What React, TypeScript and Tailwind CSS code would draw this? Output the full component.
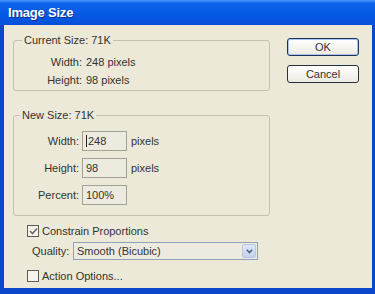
import React from 'react';

function Checkbox({ checked = false }: { checked?: boolean }) {
  return (
    <span className="w-[12px] h-[12px] shrink-0 border border-[#5c5c58] bg-[#f4f3ec] flex items-center justify-center">
      {checked && (
        <svg width="9" height="8" viewBox="0 0 9 8">
          <polyline points="1,4 3.5,6.5 8,1.5" fill="none" stroke="#6b6b66" strokeWidth="1.6" />
        </svg>
      )}
    </span>
  );
}

function Field({ label, value, caret = false, unit }: { label: string; value: string; caret?: boolean; unit?: string }) {
  return (
    <div className="flex items-center h-[20px]">
      <span className="w-[68px] text-right pr-[3px]">{label}</span>
      <div className="w-[45px] h-[20px] border border-[#a3a194] bg-[#edebe0] flex items-center pl-[3px]">
        {caret && <span className="w-px h-[12px] bg-[#222] mr-[1px]" />}
        <span>{value}</span>
      </div>
      {unit && <span className="ml-[4px]">{unit}</span>}
    </div>
  );
}

export default function App() {
  return (
    <div className="w-[375px] h-[294px] flex flex-col overflow-hidden bg-[#0a47c9] font-['Liberation_Sans',Arial,sans-serif] text-[11px] text-[#333330]">
      {/* Title bar */}
      <div className="h-[25px] shrink-0 flex items-center pl-[8px] bg-[linear-gradient(180deg,#4a97fb_0%,#0d62ea_14%,#0659e4_55%,#0650d8_100%)]">
        <span className="text-white font-bold text-[13px] tracking-[-0.2px] [text-shadow:1px_1px_0_#0b2f8f]">Image Size</span>
      </div>

      {/* Body */}
      <div className="flex-1 ml-[4px] mr-[3px] mb-[6px] bg-[#ece9d8] flex">
        <div className="w-[266px] pl-[9px] pt-[9px] flex flex-col">
          <fieldset className="border border-[#c3c1b2] rounded-[3px] pb-[3px]">
            <legend className="ml-[8px] px-[2px] leading-[13px]">Current Size: 71K</legend>
            <div className="pt-[8px] flex flex-col gap-[4px] leading-[14px]">
              <div className="flex">
                <span className="w-[72px] text-right pr-[4px]">Width:</span>
                <span>248 pixels</span>
              </div>
              <div className="flex">
                <span className="w-[72px] text-right pr-[4px]">Height:</span>
                <span>98 pixels</span>
              </div>
            </div>
          </fieldset>

          <fieldset className="mt-[18px] border border-[#c3c1b2] rounded-[3px] pb-[10px]">
            <legend className="ml-[6px] px-[2px] leading-[13px]">New Size: 71K</legend>
            <div className="pt-[9px] flex flex-col gap-[7px]">
              <Field label="Width:" value="248" caret unit="pixels" />
              <Field label="Height:" value="98" unit="pixels" />
              <Field label="Percent:" value="100%" />
            </div>
          </fieldset>

          <label className="mt-[9px] ml-[14px] flex items-center gap-[3px] h-[12px]">
            <Checkbox checked />
            <span>Constrain Proportions</span>
          </label>

          <div className="mt-[5px] ml-[19px] flex items-center h-[18px]">
            <span className="w-[41px]">Quality:</span>
            <div className="w-[185px] h-[18px] border border-[#8fa2b8] bg-[#edebe0] flex items-center justify-between pl-[3px] pr-px">
              <span>Smooth (Bicubic)</span>
              <span className="w-[14px] h-[14px] rounded-[2px] bg-[linear-gradient(180deg,#dfe7f6,#c3d1ec)] border border-[#b9c6df] flex items-center justify-center">
                <svg width="7" height="5" viewBox="0 0 7 5">
                  <polyline points="0.8,0.8 3.5,3.6 6.2,0.8" fill="none" stroke="#4a5f8a" strokeWidth="1.6" />
                </svg>
              </span>
            </div>
          </div>

          <label className="mt-[10px] ml-[14px] flex items-center gap-[3px] h-[12px]">
            <Checkbox />
            <span>Action Options...</span>
          </label>
        </div>

        <div className="ml-[17px] pt-[13px] flex flex-col gap-[9px]">
          <button className="w-[72px] h-[18px] rounded-[3px] border border-[#1f3358] bg-[linear-gradient(180deg,#ffffff,#eceae0)] shadow-[inset_0_0_0_1px_#a9c2ef] text-[11px] text-[#333330]">
            OK
          </button>
          <button className="w-[72px] h-[18px] rounded-[3px] border border-[#2a2f3a] bg-[linear-gradient(180deg,#ffffff,#eceae0)] text-[11px] text-[#333330]">
            Cancel
          </button>
        </div>
      </div>
    </div>
  );
}
